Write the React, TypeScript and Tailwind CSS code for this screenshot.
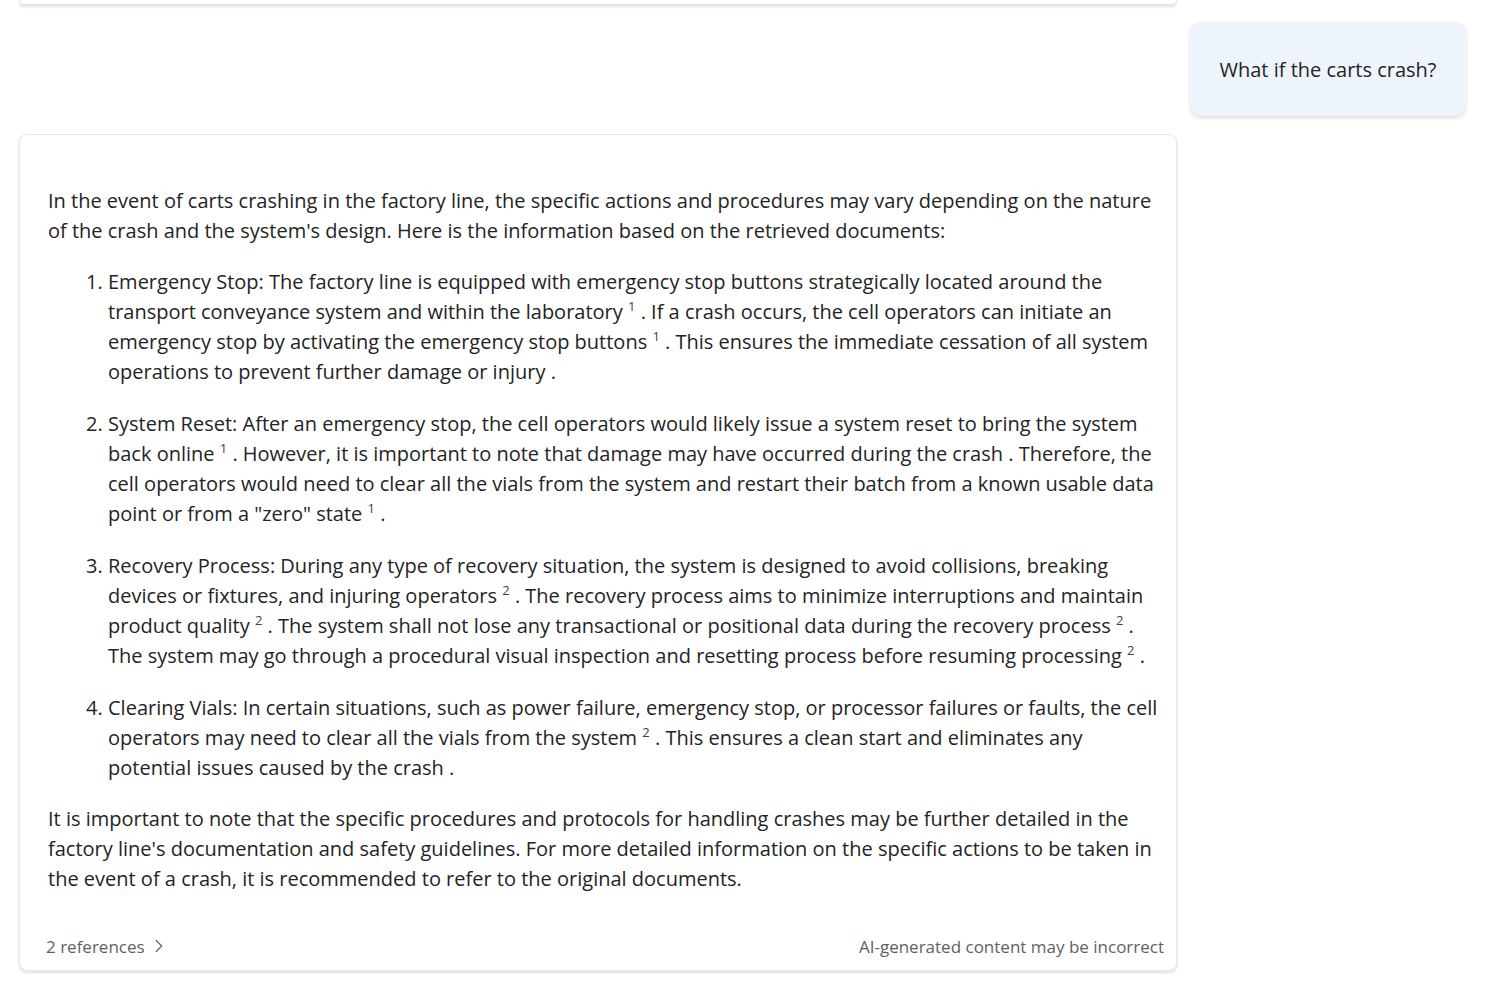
import { ChevronRight } from "lucide-react";

const font = { fontFamily: '"Segoe UI", "Open Sans", sans-serif' };

function Ref({ n }: { n: number }) {
  return (
    <>
      {" "}
      <sup className="text-[13px] leading-none text-[#424242] top-[-0.6em]">{n}</sup>{" "}
    </>
  );
}

export default function App() {
  return (
    <div style={font} className="min-h-[981px] bg-white text-[#242424] pl-[19px] pr-[20px] overflow-hidden">
      {/* previous card edge */}
      <div className="w-[1158px] h-[5px] bg-white border-x border-b border-[#e6e6e6] rounded-b-lg shadow-[0_2px_3px_rgba(0,0,0,0.12)]" />

      {/* user bubble */}
      <div className="flex justify-end mt-[17px]">
        <div className="w-[276px] h-[94px] rounded-xl bg-[#eef4fc] flex items-center justify-center pt-[2px] text-[20px] shadow-[0_2px_4px_rgba(0,0,0,0.14)]">
          What if the carts crash?
        </div>
      </div>

      {/* answer card */}
      <div className="mt-[18px] w-[1158px] h-[837px] bg-white border border-[#e8e8e8] rounded-lg shadow-[0_2px_3px_rgba(0,0,0,0.12)] flex flex-col">
        <div className="pt-[51px] pl-[28px] pr-[12px] text-[20px] leading-[30px]">
          <p>
            In the event of carts crashing in the factory line, the specific actions and procedures may vary depending on the nature of the crash and the system's design. Here is the information based on the retrieved documents:
          </p>
          <ol className="list-decimal pl-[60px] mt-[21px] flex flex-col gap-[22px]">
            <li>
              Emergency Stop: The factory line is equipped with emergency stop buttons strategically located around the transport conveyance system and within the laboratory
              <Ref n={1} />. If a crash occurs, the cell operators can initiate an emergency stop by activating the emergency stop buttons
              <Ref n={1} />. This ensures the immediate cessation of all system operations to prevent further damage or injury .
            </li>
            <li>
              System Reset: After an emergency stop, the cell operators would likely issue a system reset to bring the system back online
              <Ref n={1} />. However, it is important to note that damage may have occurred during the crash . Therefore, the cell operators would need to clear all the vials from the system and restart their batch from a known usable data point or from a "zero" state
              <Ref n={1} />.
            </li>
            <li>
              Recovery Process: During any type of recovery situation, the system is designed to avoid collisions, breaking devices or fixtures, and injuring operators
              <Ref n={2} />. The recovery process aims to minimize interruptions and maintain product quality
              <Ref n={2} />. The system shall not lose any transactional or positional data during the recovery process
              <Ref n={2} />. The system may go through a procedural visual inspection and resetting process before resuming processing
              <Ref n={2} />.
            </li>
            <li>
              Clearing Vials: In certain situations, such as power failure, emergency stop, or processor failures or faults, the cell operators may need to clear all the vials from the system
              <Ref n={2} />. This ensures a clean start and eliminates any potential issues caused by the crash .
            </li>
          </ol>
          <p className="mt-[21px]">
            It is important to note that the specific procedures and protocols for handling crashes may be further detailed in the factory line's documentation and safety guidelines. For more detailed information on the specific actions to be taken in the event of a crash, it is recommended to refer to the original documents.
          </p>
        </div>

        <div className="mt-auto flex items-center justify-between pl-[26px] pr-[12px] pb-[11px] text-[17px] text-[#616161]">
          <button className="flex items-center gap-[3px]">
            2 references
            <ChevronRight className="w-[22px] h-[22px]" strokeWidth={1.2} />
          </button>
          <span>AI-generated content may be incorrect</span>
        </div>
      </div>
    </div>
  );
}
